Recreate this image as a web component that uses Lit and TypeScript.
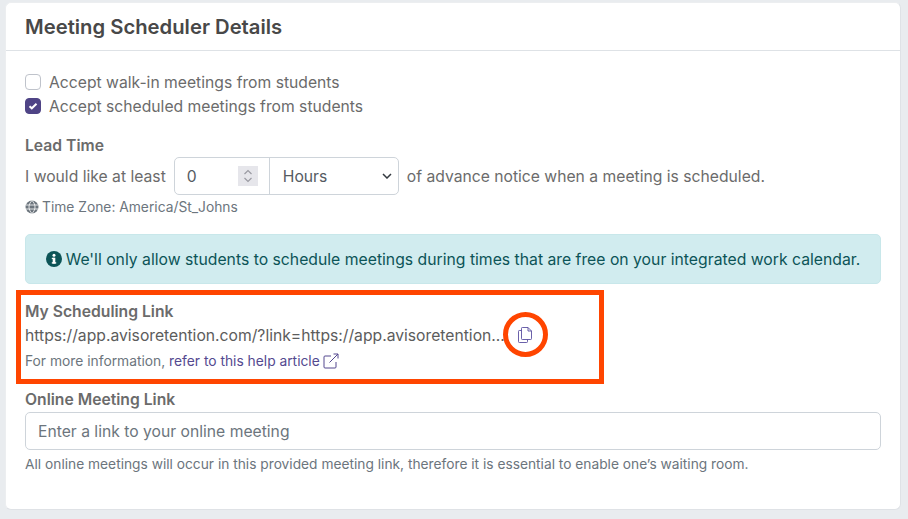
import { LitElement, html, css } from "lit";
import { customElement } from "lit/decorators.js";

@customElement("app-root")
export class AppRoot extends LitElement {
  static styles = css`
    :host { display: block; width: 908px; height: 519px; overflow: hidden; background: #e9ecef; font-family: Inter, "Liberation Sans", sans-serif; font-size: 15.7px; line-height: 24px; color: #6b6b6b; box-sizing: border-box; padding: 2px 7px 9px 5px; }
    * { box-sizing: border-box; }
    .card { height: 508px; background: #fff; border-radius: 6px; border: 1px solid #dfe2e6; border-top-color: #eceef0; border-left-color: #eceef0; }
    .head { height: 48px; padding: 0 19px; display: flex; align-items: center; border-bottom: 1px solid #dee2e6; font-size: 20.25px; font-weight: 600; color: #484848; }
    .body { padding: 19px 19px 0; }
    .check { display: flex; align-items: flex-start; gap: 8px; height: 24px; line-height: 25px; }
    .box { align-self: center; width: 16px; height: 16px; border-radius: 4px; border: 1px solid #bfc3cb; background: #fff; display: flex; align-items: center; justify-content: center; }
    .box.on { background: #4f4486; border-color: #4f4486; }
    .label { font-weight: 600; color: #6b6b6b; height: 24px; line-height: 25px; }
    .lead { margin-top: 15px; }
    .row { display: flex; align-items: flex-start; gap: 8px; height: 38px; line-height: 39px; }
    .group { display: flex; height: 38px; width: 225px; border: 1px solid #ced4da; border-radius: 5px; color: #555b62; line-height: 37px; }
    .num { width: 95px; padding: 0 11px 0 12px; display: flex; align-items: flex-start; justify-content: space-between; border-right: 1px solid #ced4da; }
    .spin { align-self: center; width: 20px; height: 20px; background: #e6e6eb; display: flex; align-items: center; justify-content: center; }
    .sel { flex: 1; padding: 0 6px 0 13px; display: flex; align-items: flex-start; justify-content: space-between; }
    .sel svg { align-self: center; }
    .tz { display: flex; align-items: center; gap: 3px; font-size: 13.8px; line-height: 20px; margin-top: 2px; color: #6c757d; }
    .alert { margin-top: 17px; height: 50px; background: #d1ecef; border: 1px solid #c8e7ea; border-radius: 5px; color: #0c5457; display: flex; align-items: flex-start; justify-content: center; gap: 4px; font-size: 15.75px; line-height: 49px; }
    .alert svg { align-self: center; }
    .sched { position: relative; margin-top: 15px; }
    .url { height: 24px; white-space: nowrap; display: flex; align-items: flex-start; line-height: 25px; color: #5c5c5c; }
    .urltext { width: 493px; }
    .copy { display: flex; align-self: center; }
    .small { font-size: 13.8px; line-height: 20px; color: #6c757d; }
    .info { margin-top: 4px; display: flex; align-items: center; gap: 3px; }
    .info a { color: #54498f; text-decoration: none; }
    .mark { position: absolute; left: -9px; top: -9px; width: 588px; height: 94px; border: 5px solid #ff4500; pointer-events: none; }
    .ring { position: absolute; left: 478px; top: 13px; width: 45px; height: 45px; border: 5px solid #ff4500; border-radius: 50%; pointer-events: none; }
    .online { margin-top: 16px; }
    .input { display: block; width: 100%; height: 38px; margin-top: 1px; border: 1px solid #ced4da; border-radius: 5px; padding: 0 12px; font: inherit; color: #555b62; outline: none; }
    .input::placeholder { color: #6c757d; opacity: 1; }
    .help { margin-top: 4px; font-size: 13.75px; }
  `;

  render() {
    return html`<div class="card">
      <div class="head">Meeting Scheduler Details</div>
      <div class="body">
        <div class="check"><span class="box"></span>Accept walk-in meetings from students</div>
        <div class="check"><span class="box on"><svg width="10" height="8" viewBox="0 0 10 8"><path d="M1.5 4.2 3.8 6.3 8.5 1.7" fill="none" stroke="#fff" stroke-width="2"/></svg></span>Accept scheduled meetings from students</div>
        <div class="label lead">Lead Time</div>
        <div class="row">
          I would like at least
          <div class="group">
            <div class="num">0<span class="spin"><svg width="10" height="16" viewBox="0 0 10 16"><path d="M1.5 6 5 2.5 8.5 6M1.5 10 5 13.5 8.5 10" fill="none" stroke="#9a9aa2" stroke-width="1.2"/></svg></span></div>
            <div class="sel">Hours<svg width="10" height="6" viewBox="0 0 10 6"><path d="M1 1 5 5 9 1" fill="none" stroke="#343a40" stroke-width="1.5"/></svg></div>
          </div>
          of advance notice when a meeting is scheduled.
        </div>
        <div class="tz"><svg width="14" height="14" viewBox="0 0 14 14"><circle cx="7" cy="7" r="6.5" fill="#6c757d"/><path d="M.5 5h13M.5 9h13M7 .5c-4 4-4 9 0 13M7 .5c4 4 4 9 0 13" fill="none" stroke="#fff" stroke-width=".8"/></svg>Time Zone: America/St_Johns</div>
        <div class="alert"><svg width="16" height="16" viewBox="0 0 16 16"><circle cx="8" cy="8" r="8" fill="#0c5457"/><rect x="6.7" y="6.8" width="2.6" height="5.8" fill="#fff"/><rect x="5.8" y="11.2" width="4.4" height="1.4" fill="#fff"/><rect x="5.8" y="6.8" width="3" height="1.3" fill="#fff"/><circle cx="8" cy="4.3" r="1.5" fill="#fff"/></svg>We'll only allow students to schedule meetings during times that are free on your integrated work calendar.</div>
        <div class="sched">
          <div class="label">My Scheduling Link</div>
          <div class="url"><span class="urltext">https://app.avisoretention.com/?link=https://app.avisoretention...</span><span class="copy"><svg width="14" height="16" viewBox="0 0 14 16"><path d="M3.5 3.5H1.3a.8.8 0 0 0-.8.8v10.4a.8.8 0 0 0 .8.8h7.4a.8.8 0 0 0 .8-.8V12.5M3.5 1.3a.8.8 0 0 1 .8-.8h5.7l3.5 3.5v7.7a.8.8 0 0 1-.8.8H4.3a.8.8 0 0 1-.8-.8ZM10 .5V4h3.5" fill="none" stroke="#5a4fa0" stroke-width=".9"/></svg></span></div>
          <div class="small info"><span>For more information, <a>refer to this help article</a></span><svg width="16" height="16" viewBox="0 0 16 16"><path d="M13 9v5a1 1 0 0 1-1 1H2a1 1 0 0 1-1-1V4a1 1 0 0 1 1-1h6M6.5 9.5 15 1M10.5 1H15v4.5" fill="none" stroke="#54498f"/></svg></div>
          <div class="mark"></div>
          <div class="ring"></div>
        </div>
        <div class="label online">Online Meeting Link</div>
        <input class="input" placeholder="Enter a link to your online meeting" />
        <div class="small help">All online meetings will occur in this provided meeting link, therefore it is essential to enable one’s waiting room.</div>
      </div>
    </div>`;
  }
}
